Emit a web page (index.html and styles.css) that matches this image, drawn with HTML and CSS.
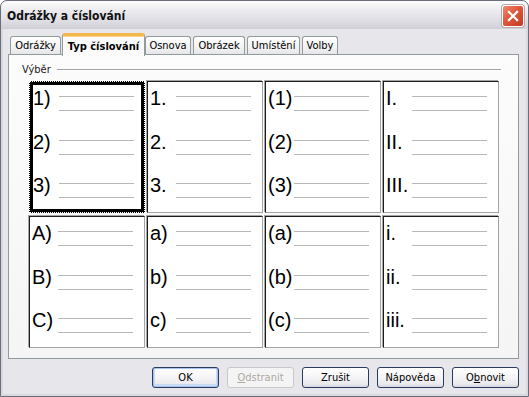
FILE: index.html
```html
<!DOCTYPE html>
<html lang="cs">
<head>
<meta charset="utf-8">
<title>Odrážky a číslování</title>
<link rel="stylesheet" href="styles.css">
</head>
<body>
<div class="window">
  <div class="titlebar">
    <span class="title">Odrážky a číslování</span>
    <span class="close">
      <svg width="22" height="22" viewBox="0 0 22 22">
        <path d="M6.5 6.5 L15.5 15.5 M15.5 6.5 L6.5 15.5" stroke="#fff" stroke-width="2.4" stroke-linecap="square"/>
      </svg>
    </span>
  </div>
  <div class="client">
    <div class="tabs">
      <div class="tab t1">Odrážky</div>
      <div class="tab active">Typ číslování</div>
      <div class="tab t3">Osnova</div>
      <div class="tab t4">Obrázek</div>
      <div class="tab t5">Umístění</div>
      <div class="tab t6">Volby</div>
    </div>
    <div class="pane">
      <div class="group-head"><span class="group-label">Výběr</span><span class="rule"></span></div>
      <div class="grid">
        <div class="cell selected">
          <div class="item"><span class="num">1)</span><span class="lines"></span></div>
          <div class="item"><span class="num">2)</span><span class="lines"></span></div>
          <div class="item"><span class="num">3)</span><span class="lines"></span></div>
        </div>
        <div class="cell">
          <div class="item"><span class="num">1.</span><span class="lines"></span></div>
          <div class="item"><span class="num">2.</span><span class="lines"></span></div>
          <div class="item"><span class="num">3.</span><span class="lines"></span></div>
        </div>
        <div class="cell">
          <div class="item"><span class="num">(1)</span><span class="lines"></span></div>
          <div class="item"><span class="num">(2)</span><span class="lines"></span></div>
          <div class="item"><span class="num">(3)</span><span class="lines"></span></div>
        </div>
        <div class="cell">
          <div class="item"><span class="num">I.</span><span class="lines"></span></div>
          <div class="item"><span class="num">II.</span><span class="lines"></span></div>
          <div class="item"><span class="num">III.</span><span class="lines"></span></div>
        </div>
        <div class="cell">
          <div class="item"><span class="num">A)</span><span class="lines"></span></div>
          <div class="item"><span class="num">B)</span><span class="lines"></span></div>
          <div class="item"><span class="num">C)</span><span class="lines"></span></div>
        </div>
        <div class="cell">
          <div class="item"><span class="num">a)</span><span class="lines"></span></div>
          <div class="item"><span class="num">b)</span><span class="lines"></span></div>
          <div class="item"><span class="num">c)</span><span class="lines"></span></div>
        </div>
        <div class="cell">
          <div class="item"><span class="num">(a)</span><span class="lines"></span></div>
          <div class="item"><span class="num">(b)</span><span class="lines"></span></div>
          <div class="item"><span class="num">(c)</span><span class="lines"></span></div>
        </div>
        <div class="cell">
          <div class="item"><span class="num">i.</span><span class="lines"></span></div>
          <div class="item"><span class="num">ii.</span><span class="lines"></span></div>
          <div class="item"><span class="num">iii.</span><span class="lines"></span></div>
        </div>
      </div>
    </div>
    <div class="buttons">
      <button class="btn default">OK</button>
      <button class="btn" disabled><u>O</u>dstranit</button>
      <button class="btn">Zrušit</button>
      <button class="btn">Nápověda</button>
      <button class="btn">O<u>b</u>novit</button>
    </div>
  </div>
</div>
</body>
</html>
```
FILE: styles.css
```css
html, body {
  margin: 0;
  padding: 0;
  background: #ffffff;
}

body {
  font-family: "DejaVu Sans Condensed", "DejaVu Sans", sans-serif;
  font-size: 11px;
  color: #000;
}

.window {
  width: 529px;
  height: 397px;
  box-sizing: border-box;
  border: 1px solid #6c6c7c;
  border-radius: 7px 7px 0 0;
  background: #d8d8de;
  display: flex;
  flex-direction: column;
  overflow: hidden;
}

.titlebar {
  height: 28px;
  flex: none;
  display: flex;
  align-items: flex-start;
  justify-content: space-between;
  background: linear-gradient(#fdfdfd 0%, #ebebef 35%, #dcdce2 75%, #cfcfd6 100%);
  border-radius: 6px 6px 0 0;
}

.title {
  font-family: "DejaVu Sans Condensed", "DejaVu Sans", sans-serif;
  font-weight: bold;
  font-size: 12px;
  line-height: 16px;
  margin: 7px 0 0 6px;
  color: #101010;
}

.close {
  width: 22px;
  height: 22px;
  margin: 4px 4px 0 0;
  box-sizing: border-box;
  border: 1px solid #fff;
  border-radius: 3px;
  background: linear-gradient(135deg, #f08a70 0%, #e0563a 45%, #c33a26 100%);
  display: flex;
  align-items: center;
  justify-content: center;
  box-shadow: 0 0 0 1px #b9a9a9;
}

.close svg {
  display: block;
}

.client {
  flex: 1;
  margin: 0 2px 2px 2px;
  background: #e7e6ea;
  padding: 4px 7px 0 5px;
  display: flex;
  flex-direction: column;
}

.tabs {
  display: flex;
  align-items: flex-end;
  height: 21px;
  padding-left: 2px;
  position: relative;
  z-index: 1;
}

.tab {
  height: 18px;
  box-sizing: border-box;
  border: 1px solid #919b9c;
  border-bottom: none;
  border-radius: 3px 3px 0 0;
  background: linear-gradient(#ffffff, #f3f3f3 60%, #e6e6ea);
  padding: 2px 0 0 0;
  text-align: center;
  line-height: 14px;
  white-space: nowrap;
  margin-right: 2px;
  color: #000;
}

.t1 { width: 51px; margin-right: 0; }
.t3 { width: 46px; }
.t4 { width: 52px; }
.t5 { width: 53px; }
.t6 { width: 36px; }

.tab.active {
  width: 83px;
  height: 23px;
  margin: 0 0 -2px 1px;
  padding-top: 4px;
  font-weight: bold;
  background: #fbfbfc;
  border-top: 3px solid #f5b64b;
  border-radius: 3px 3px 0 0;
  box-shadow: inset 0 1px 0 #ffd08a;
}

.pane {
  height: 305px;
  box-sizing: border-box;
  border: 1px solid #919b9c;
  background: linear-gradient(#fcfcfd, #f5f5f6);
  display: flex;
  flex-direction: column;
}

.group-head {
  display: flex;
  align-items: center;
  padding: 8px 17px 0 13px;
  height: 13px;
}

.group-label {
  color: #1a1a1a;
  line-height: 13px;
}

.rule {
  flex: 1;
  margin-left: 6px;
  height: 0;
  border-top: 1px solid #a3a3a8;
  border-bottom: 1px solid #ffffff;
}

.grid {
  margin: 5px 0 0 20px;
  display: grid;
  grid-template-columns: repeat(4, 116px);
  grid-template-rows: repeat(2, 132px);
  gap: 3px 2px;
}

.cell {
  box-sizing: border-box;
  background: #ffffff;
  border: 1px solid;
  border-color: #1c1c1c #a4a4a4 #a4a4a4 #1c1c1c;
  box-shadow: -1px -1px 0 #a6a6a6;
  padding: 6px 0 0 2px;
  overflow: hidden;
}

.cell.selected {
  border: 4px solid #000;
  padding: 3px 0 0 0;
  outline: 1px dotted #ffffff;
  outline-offset: -1px;
  box-shadow: none;
}

.item {
  height: 44px;
  display: grid;
  grid-template-columns: 26px 75px;
  align-items: start;
}

.item:last-child {
  margin-top: -1px;
}

.num {
  font-family: "Liberation Sans", Arial, sans-serif;
  font-size: 20px;
  line-height: 20px;
  white-space: nowrap;
  color: #000;
}

.lines {
  display: block;
  margin-top: 8px;
  height: 13px;
  border-top: 1px solid #b8b8b8;
  border-bottom: 1px solid #b8b8b8;
}

.buttons {
  display: flex;
  justify-content: flex-end;
  gap: 8px;
  margin-top: 8px;
  padding-right: 0;
}

.btn {
  width: 67px;
  height: 21px;
  box-sizing: border-box;
  font-family: "DejaVu Sans Condensed", "DejaVu Sans", sans-serif;
  font-size: 11px;
  color: #000;
  border: 1px solid #2a3b5e;
  border-radius: 3px;
  background: linear-gradient(#ffffff 0%, #f6f6f8 45%, #e9e9ee 85%, #d6d6de 100%);
  padding: 0;
  line-height: 18px;
}

.btn.default {
  box-shadow: inset 0 0 0 1px #a8c4ee, inset 0 -1px 0 2px #c9daf5;
}

.btn:disabled {
  color: #aca8a0;
  border-color: #c9c8cc;
  background: #f4f4f4;
}

.btn u {
  text-decoration: underline;
}
```
